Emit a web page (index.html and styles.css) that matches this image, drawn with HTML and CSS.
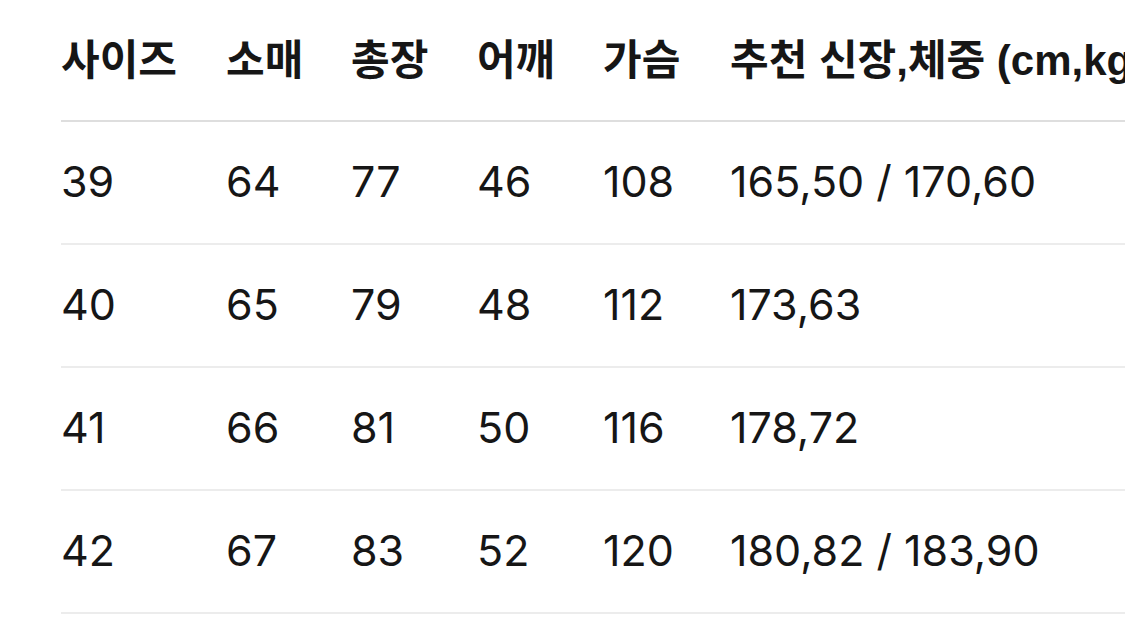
FILE: index.html
```html
<!DOCTYPE html>
<html lang="ko">
<head>
<meta charset="utf-8">
<link rel="stylesheet" href="styles.css">
</head>
<body>
<div class="wrap">
  <table class="size-table">
    <thead>
      <tr>
        <th class="c1">사이즈</th>
        <th class="c2">소매</th>
        <th class="c3">총장</th>
        <th class="c4">어깨</th>
        <th class="c5">가슴</th>
        <th class="c6">추천 신장,체중 (cm,kg)</th>
      </tr>
    </thead>
    <tbody>
      <tr><td>39</td><td>64</td><td>77</td><td>46</td><td>108</td><td>165,50 / 170,60</td></tr>
      <tr><td>40</td><td>65</td><td>79</td><td>48</td><td>112</td><td>173,63</td></tr>
      <tr><td>41</td><td>66</td><td>81</td><td>50</td><td>116</td><td>178,72</td></tr>
      <tr><td>42</td><td>67</td><td>83</td><td>52</td><td>120</td><td>180,82 / 183,90</td></tr>
    </tbody>
  </table>
</div>
</body>
</html>
```

FILE: styles.css
```css
html, body {
  margin: 0;
  padding: 0;
  background: #ffffff;
}
body {
  width: 1125px;
  height: 632px;
  overflow: hidden;
  font-family: "Inter", "Noto Sans CJK KR", sans-serif;
  color: #161616;
}
.wrap {
  padding-left: 61px;
  overflow: hidden;
}
.size-table {
  border-collapse: collapse;
  table-layout: fixed;
  width: 1400px;
}
.size-table th,
.size-table td {
  padding: 0;
  text-align: left;
  white-space: nowrap;
  vertical-align: middle;
}
.size-table th {
  height: 113px;
  padding-bottom: 7px;
  font-family: "Liberation Sans", "Noto Sans CJK KR", sans-serif;
  font-size: 42px;
  font-weight: 700;
  border-bottom: 2px solid #dedede;
}
.size-table td {
  height: 117px;
  padding-bottom: 4px;
  font-size: 43px;
  font-weight: 400;
  border-bottom: 2px solid #ececec;
}
.c1 { width: 165px; }
.c2 { width: 125px; }
.c3 { width: 126px; }
.c4 { width: 126px; }
.c5 { width: 127px; }
.c6 { width: auto; }
```
